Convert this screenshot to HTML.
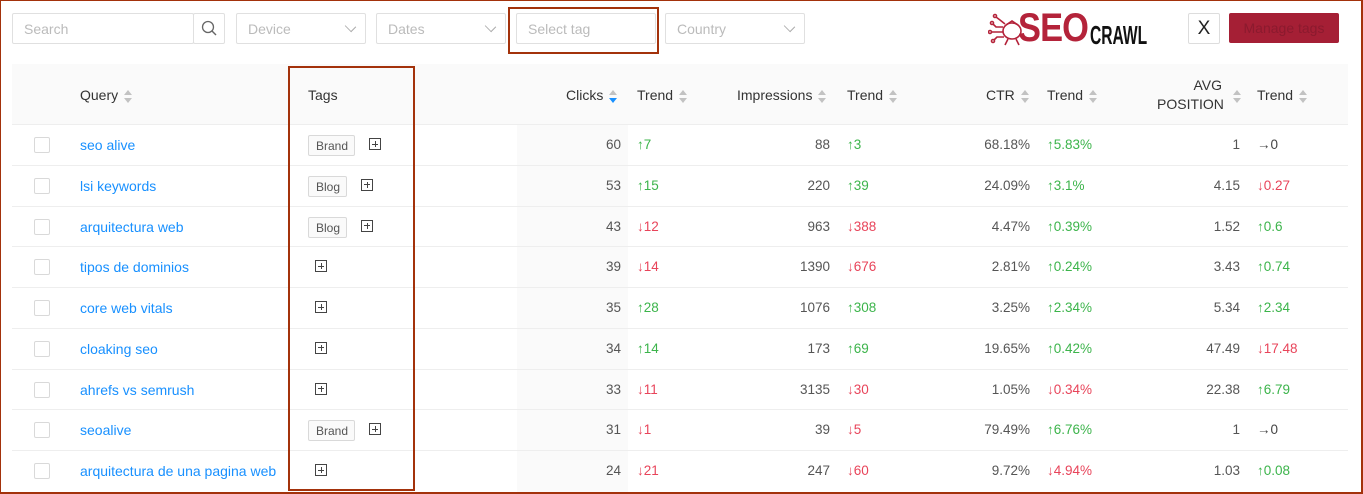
<!DOCTYPE html>
<html><head><meta charset="utf-8">
<style>
*{box-sizing:border-box;margin:0;padding:0}
body{width:1363px;height:494px;background:#fff;font-family:"Liberation Sans",sans-serif;font-size:13.5px;color:#555;position:relative;overflow:hidden}
.a{position:absolute}
.frame{left:0;top:0;width:1363px;height:494px;border:1px solid #a3320b;border-right-width:2px;border-bottom-width:2px}
.inp{border:1px solid #e0e0e0;border-radius:2px;height:31px;color:#bbb;padding:7px 11px;font-size:14px}
.chev{position:absolute;right:10px;top:8px;width:9px;height:9px;border-right:1px solid #aaa;border-bottom:1px solid #aaa;transform:rotate(45deg) scaleY(.8)}
.hdr{left:12px;top:64px;width:1336px;height:61px;background:#fafafa}
.h{color:#333;font-size:14px}
.sort{display:inline-block;width:8px;height:13px;vertical-align:middle;margin-left:6px;position:relative}
.sort:before,.sort:after{content:"";position:absolute;left:0;border-left:4px solid transparent;border-right:4px solid transparent}
.sort:before{top:0;border-bottom:5px solid #c2c2c2}
.sort:after{bottom:0;border-top:5px solid #c2c2c2}
.sort.on:after{border-top-color:#1890ff}
.line{left:12px;width:1336px;height:1px;background:#eeeeee}
.cb{width:16px;height:16px;border:1px solid #d9d9d9;border-radius:2px;background:#fff}
.q{color:#1890ff;font-size:14px}
.chip{border:1px solid #d9d9d9;background:#fafafa;border-radius:2px;font-size:12px;color:#555;height:21px;padding:3px 7px}
.plus{width:12px;height:12px;border:1px solid #444;}
.plus:before{content:"";position:absolute;left:2px;top:4.5px;width:6px;height:1px;background:#444}
.plus:after{content:"";position:absolute;left:4.5px;top:2px;width:1px;height:6px;background:#444}
.r{text-align:right}
.up{color:#3cb44b}.dn{color:#e8445a}.eq{color:#444}
</style></head><body>
<div class="a inp" style="left:12px;top:13px;width:182px">Search</div>
<div class="a inp" style="left:193px;top:13px;width:32px;padding:0"><svg width="30" height="29" viewBox="0 0 30 29"><circle cx="14" cy="13" r="5.5" fill="none" stroke="#666" stroke-width="1.3"/><line x1="18" y1="17" x2="22" y2="21" stroke="#666" stroke-width="1.4"/></svg></div>
<div class="a inp" style="left:236px;top:13px;width:130px">Device<span class="chev"></span></div>
<div class="a inp" style="left:376px;top:13px;width:130px">Dates<span class="chev"></span></div>
<div class="a inp" style="left:516px;top:13px;width:140px">Select tag</div>
<div class="a" style="left:508px;top:7px;width:151px;height:47px;border:2px solid #a3320b"></div>
<div class="a inp" style="left:665px;top:13px;width:140px">Country<span class="chev"></span></div>
<div class="a" style="left:988px;top:9px;width:170px;height:40px">
<svg class="a" style="left:0;top:2px" width="44" height="38" viewBox="0 0 44 36" fill="none" stroke="#b4233a" stroke-width="1.6"><ellipse cx="24" cy="19" rx="9" ry="8"/><path d="M18 13 L24 9 L30 13"/><path d="M15 15 H8 L5 12 M15 20 H3 M16 25 H9 L6 28 M20 27 L17 33 M28 27 L31 33 M12 8 L17 12 M8 5 L12 8"/><circle cx="4" cy="11" r="1.5"/><circle cx="2" cy="20" r="1.5"/><circle cx="5" cy="29" r="1.5"/><circle cx="7" cy="4" r="1.5"/></svg>
<span class="a" style="left:30px;top:-4px;font-size:40px;font-weight:bold;color:#b4233a;transform:scaleX(.86);transform-origin:left;letter-spacing:-1px;line-height:46px">SEO</span>
<span class="a" style="left:102px;top:13px;font-size:26px;font-weight:bold;color:#111;transform:scaleX(.6);transform-origin:left;line-height:26px">CRAWL</span>
</div>
<div class="a" style="left:1188px;top:13px;width:32px;height:31px;border:1px solid #ddd;border-radius:2px;text-align:center;font-size:19px;line-height:29px;color:#222">X</div>
<div class="a" style="left:1229px;top:13px;width:110px;height:30px;background:#a51f35;border-radius:2px;color:#8b1a2e;font-size:14px;text-align:center;line-height:30px">Manage tags</div>

<div class="a hdr"></div>
<div class="a" style="left:517px;top:125px;width:111px;height:368px;background:#fafafa"></div>
<div class="a h" style="left:80px;top:87px">Query<span class="sort"></span></div>
<div class="a h" style="left:308px;top:87px">Tags</div>
<div class="a h" style="left:566px;top:87px">Clicks<span class="sort on"></span></div>
<div class="a h" style="left:637px;top:87px">Trend<span class="sort"></span></div>
<div class="a h" style="left:737px;top:87px">Impressions<span class="sort"></span></div>
<div class="a h" style="left:847px;top:87px">Trend<span class="sort"></span></div>
<div class="a h" style="left:986px;top:87px">CTR<span class="sort"></span></div>
<div class="a h" style="left:1047px;top:87px">Trend<span class="sort"></span></div>
<div class="a h" style="left:1157px;top:76px;text-align:right;width:65px;line-height:19px">AVG<br>POSITION</div>
<div class="a" style="left:1227px;top:88px"><span class="sort"></span></div>
<div class="a h" style="left:1257px;top:87px">Trend<span class="sort"></span></div>

<div id="rows"></div>
<script>
var d=[["seo alive","Brand",60,"u7",88,"u3","68.18%","u5.83%","1","e0"],
["lsi keywords","Blog",53,"u15",220,"u39","24.09%","u3.1%","4.15","d0.27"],
["arquitectura web","Blog",43,"d12",963,"d388","4.47%","u0.39%","1.52","u0.6"],
["tipos de dominios","",39,"d14",1390,"d676","2.81%","u0.24%","3.43","u0.74"],
["core web vitals","",35,"u28",1076,"u308","3.25%","u2.34%","5.34","u2.34"],
["cloaking seo","",34,"u14",173,"u69","19.65%","u0.42%","47.49","d17.48"],
["ahrefs vs semrush","",33,"d11",3135,"d30","1.05%","d0.34%","22.38","u6.79"],
["seoalive","Brand",31,"d1",39,"d5","79.49%","u6.76%","1","e0"],
["arquitectura de una pagina web","",24,"d21",247,"d60","9.72%","d4.94%","1.03","u0.08"]];
function t(s){var c=s[0],v=s.slice(1);return c=="u"?'<span class="up">↑'+v+'</span>':c=="d"?'<span class="dn">↓'+v+'</span>':'<span class="eq">→'+v+'</span>'}
var h="";
d.forEach(function(r,i){var c=145+i*40.75,y=c-8;
h+='<div class="a line" style="top:'+(c-21)+'px"></div>';
h+='<div class="a cb" style="left:34px;top:'+(c-8)+'px"></div>';
h+='<div class="a q" style="left:80px;top:'+y+'px">'+r[0]+'</div>';
var px=315;
if(r[1]){var w=r[1]=="Brand"?47:39;h+='<div class="a chip" style="left:308px;top:'+(c-10)+'px;width:'+w+'px">'+r[1]+'</div>';px=308+w+14;}
h+='<div class="a plus" style="left:'+px+'px;top:'+(c-7)+'px"></div>';
h+='<div class="a r" style="left:560px;width:61px;top:'+y+'px">'+r[2]+'</div>';
h+='<div class="a" style="left:637px;top:'+y+'px">'+t(r[3])+'</div>';
h+='<div class="a r" style="left:760px;width:70px;top:'+y+'px">'+r[4]+'</div>';
h+='<div class="a" style="left:847px;top:'+y+'px">'+t(r[5])+'</div>';
h+='<div class="a r" style="left:950px;width:80px;top:'+y+'px">'+r[6]+'</div>';
h+='<div class="a" style="left:1047px;top:'+y+'px">'+t(r[7])+'</div>';
h+='<div class="a r" style="left:1170px;width:70px;top:'+y+'px">'+r[8]+'</div>';
h+='<div class="a" style="left:1257px;top:'+y+'px">'+t(r[9])+'</div>';
});
document.getElementById("rows").innerHTML=h;
</script>
<div class="a" style="left:288px;top:66px;width:127px;height:425px;border:2px solid #a3320b"></div>
<div class="a frame"></div>
</body></html>
